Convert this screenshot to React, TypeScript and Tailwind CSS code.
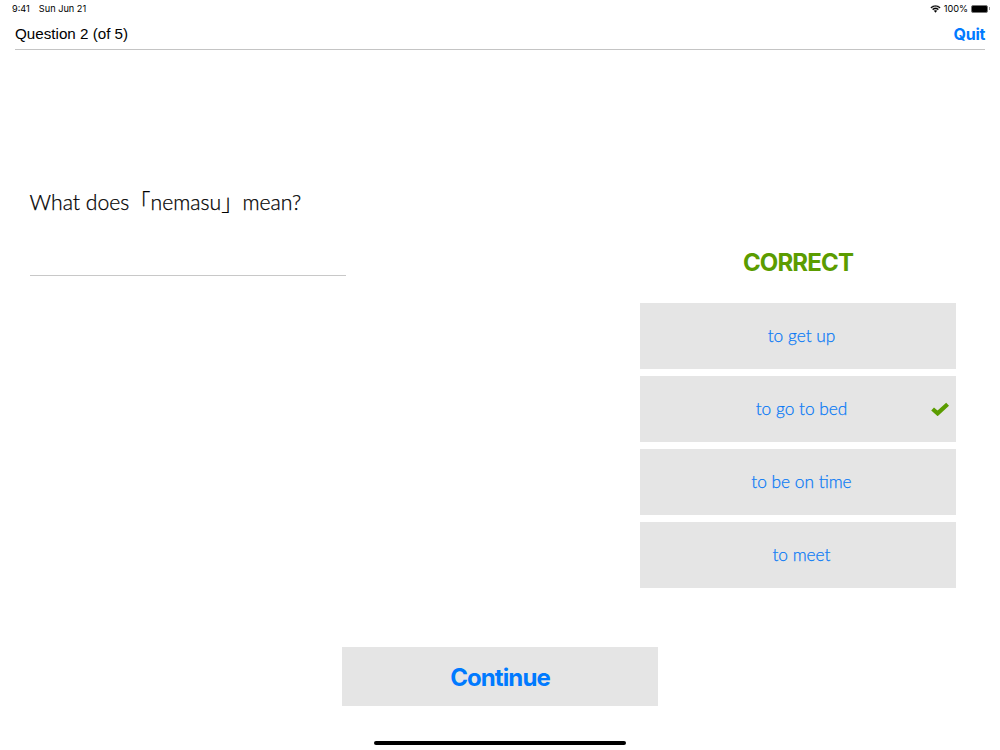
const answers = ["to get up", "to go to bed", "to be on time", "to meet"];

const StatusBar = () => (
  <div className="h-[18px] pl-[12px] pr-[10px] flex items-center justify-between text-[9.2px] text-black font-['Inter',sans-serif]">
    <div className="flex gap-[9px]">
      <span>9:41</span>
      <span>Sun Jun 21</span>
    </div>
    <div className="flex items-center gap-[3px]">
      <svg width="11" height="8" viewBox="0 0 22 16" fill="black" stroke="black" strokeWidth="0.6">
        <path d="M11 3.2c3.100 0 5.900 1.200 8 3.200l1.600-1.700C18.100 2.300 14.700.8 11 .8S3.900 2.300 1.400 4.700L3 6.400c2.100-2 4.900-3.200 8-3.200z" />
        <path d="M11 8c1.800 0 3.400.7 4.600 1.800l1.700-1.700C15.600 6.500 13.400 5.600 11 5.600s-4.600.9-6.300 2.500l1.700 1.700C7.600 8.700 9.200 8 11 8z" />
        <path d="M11 10.400c-1.100 0-2.100.4-2.900 1.100L11 15l2.900-3.500c-.8-.7-1.800-1.100-2.900-1.100z" />
      </svg>
      <span>100%</span>
      <div className="flex items-center gap-[1px]">
        <div className="w-[17px] h-[8px] rounded-[2px] bg-black border border-[#777]" />
        <div className="w-[1px] h-[3px] bg-[#999]" />
      </div>
    </div>
  </div>
);

export default function App() {
  return (
    <div className="w-[1000px] h-[750px] bg-white flex flex-col overflow-hidden relative">
      <StatusBar />
      <div className="mx-[15px] h-[32px] pt-[1px] border-b border-[#c4c4c4] flex items-center justify-between">
        <span className="text-[15.2px] text-black font-['Liberation_Sans',sans-serif]">Question 2 (of 5)</span>
        <span className="text-[16px] font-bold tracking-[-0.3px] text-[#007aff] font-['Inter',sans-serif]">Quit</span>
      </div>

      <div className="flex-1 flex justify-between pl-[29.5px] pr-[44px] font-['Lato',sans-serif] font-light [-webkit-text-stroke:0.25px]">
        <div className="w-[316px] pt-[136px]">
          <div className="text-[21.2px] leading-[32px] text-black font-['Lato','Noto_Sans_CJK_JP',sans-serif] border-b border-[#c8c8c8] h-[90px]">
            What does「nemasu」mean?
          </div>
        </div>
        <div className="w-[316px] pt-[198px] flex flex-col">
          <div className="h-[30px] mb-[25px] flex items-center justify-center text-[24px] tracking-[-0.85px] font-bold text-[#5b9c00] font-['Inter',sans-serif] [-webkit-text-stroke:0]">
            CORRECT
          </div>
          <div className="flex flex-col gap-[7px]">
            {answers.map((a, i) => (
              <div key={a} className="h-[66px] bg-[#e5e5e5] relative flex items-center justify-center pl-[7px] text-[17.3px] text-[#0a7af5]">
                {a}
                {i === 1 && (
                  <svg viewBox="0 0 18 14" className="absolute right-[7px] top-[26px] w-[18px] h-[14px]" fill="none" stroke="#5b9c00" strokeWidth="4.2">
                    <path d="M1.600 7 L6.600 11.400 L16.600 2.200" />
                  </svg>
                )}
              </div>
            ))}
          </div>
        </div>
      </div>

      <div className="flex justify-center mb-[44px]">
        <div className="w-[316px] h-[59px] pt-[2px] bg-[#e5e5e5] flex items-center justify-center text-[24px] tracking-[-0.9px] font-bold text-[#007aff] font-['Inter',sans-serif]">
          Continue
        </div>
      </div>
      <div className="absolute bottom-[5px] left-[374px] w-[252px] h-[4px] rounded-full bg-black" />
    </div>
  );
}
